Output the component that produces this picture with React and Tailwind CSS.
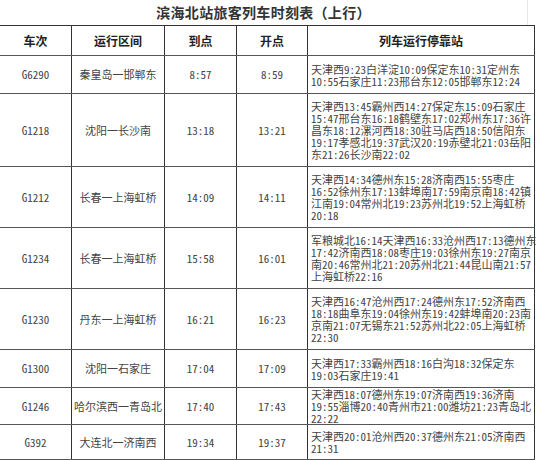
import React from 'react'

const rows = [
  { no: 'G6290', route: '秦皇岛一邯郸东', arr: '8:57', dep: '8:59', h: 'h-[38px]',
    stops: ['天津西9:23白洋淀10:09保定东10:31定州东', '10:55石家庄11:23邢台东12:05邯郸东12:24'] },
  { no: 'G1218', route: '沈阳一长沙南', arr: '13:18', dep: '13:21', h: 'h-[73px]',
    stops: ['天津西13:45霸州西14:27保定东15:09石家庄', '15:47邢台东16:18鹤壁东17:02郑州东17:36许', '昌东18:12漯河西18:30驻马店西18:50信阳东', '19:17孝感北19:37武汉20:19赤壁北21:03岳阳', '东21:26长沙南22:02'] },
  { no: 'G1212', route: '长春一上海虹桥', arr: '14:09', dep: '14:11', h: 'h-[61px]',
    stops: ['天津西14:34德州东15:28济南西15:55枣庄', '16:52徐州东17:13蚌埠南17:59南京南18:42镇', '江南19:04常州北19:23苏州北19:52上海虹桥', '20:18'] },
  { no: 'G1234', route: '长春一上海虹桥', arr: '15:58', dep: '16:01', h: 'h-[61px]',
    stops: ['军粮城北16:14天津西16:33沧州西17:13德州东', '17:42济南西18:08枣庄19:03徐州东19:27南京', '南20:46常州北21:20苏州北21:44昆山南21:57', '上海虹桥22:16'] },
  { no: 'G1230', route: '丹东一上海虹桥', arr: '16:21', dep: '16:23', h: 'h-[61px]',
    stops: ['天津西16:47沧州西17:24德州东17:52济南西', '18:18曲阜东19:04徐州东19:42蚌埠南20:23南', '京南21:07无锡东21:52苏州北22:05上海虹桥', '22:30'] },
  { no: 'G1300', route: '沈阳一石家庄', arr: '17:04', dep: '17:09', h: 'h-[38px]',
    stops: ['天津西17:33霸州西18:16白沟18:32保定东', '19:03石家庄19:41'] },
  { no: 'G1246', route: '哈尔滨西一青岛北', arr: '17:40', dep: '17:43', h: 'h-[37px]',
    stops: ['天津西18:07德州东19:07济南西19:36济南', '19:55淄博20:40青州市21:00潍坊21:23青岛北', '22:22'] },
  { no: 'G392', route: '大连北一济南西', arr: '19:34', dep: '19:37', h: 'h-[35px]',
    stops: ['天津西20:01沧州西20:37德州东21:05济南西', '21:31'] },
]

const cell = 'flex items-center justify-center border-r border-[#333]'

export default function App() {
  return (
    <div className="w-[538px] h-[460px] overflow-hidden bg-white font-['Noto_Sans_CJK_SC',sans-serif] text-[#444]">
      <div className="h-[25px] w-[528px] flex items-center justify-center border-r border-[#e6e6e6] text-[14px] font-bold text-[#333] tracking-[0.3px]">
        滨海北站旅客列车时刻表（上行）
      </div>

      {/* half-width digits, like the SimSun figures in the print */}
      <div className="w-[535px] border-t border-[#333] [font-feature-settings:'hwid']">
        <div className="flex h-[30px] border-b border-[#555] text-[12px] font-bold text-[#222]">
          <div className={`${cell} w-[72px]`}>车次</div>
          <div className={`${cell} w-[93px]`}>运行区间</div>
          <div className={`${cell} w-[72px]`}>到点</div>
          <div className={`${cell} w-[71px]`}>开点</div>
          <div className={`${cell} w-[227px]`}>列车运行停靠站</div>
        </div>

        {rows.map(r => (
          <div key={r.no} className={`flex ${r.h} border-b border-[#555] text-[11px]`}>
            <div className={`${cell} w-[72px]`}>{r.no}</div>
            <div className={`${cell} w-[93px] whitespace-nowrap`}>{r.route}</div>
            <div className={`${cell} w-[72px]`}>{r.arr}</div>
            <div className={`${cell} w-[71px]`}>{r.dep}</div>
            <div className="w-[227px] border-r border-[#333] flex flex-col justify-center pl-[3px] leading-[12px] whitespace-nowrap">
              {r.stops.map((s, i) => <div key={i}>{s}</div>)}
            </div>
          </div>
        ))}
      </div>
    </div>
  )
}
